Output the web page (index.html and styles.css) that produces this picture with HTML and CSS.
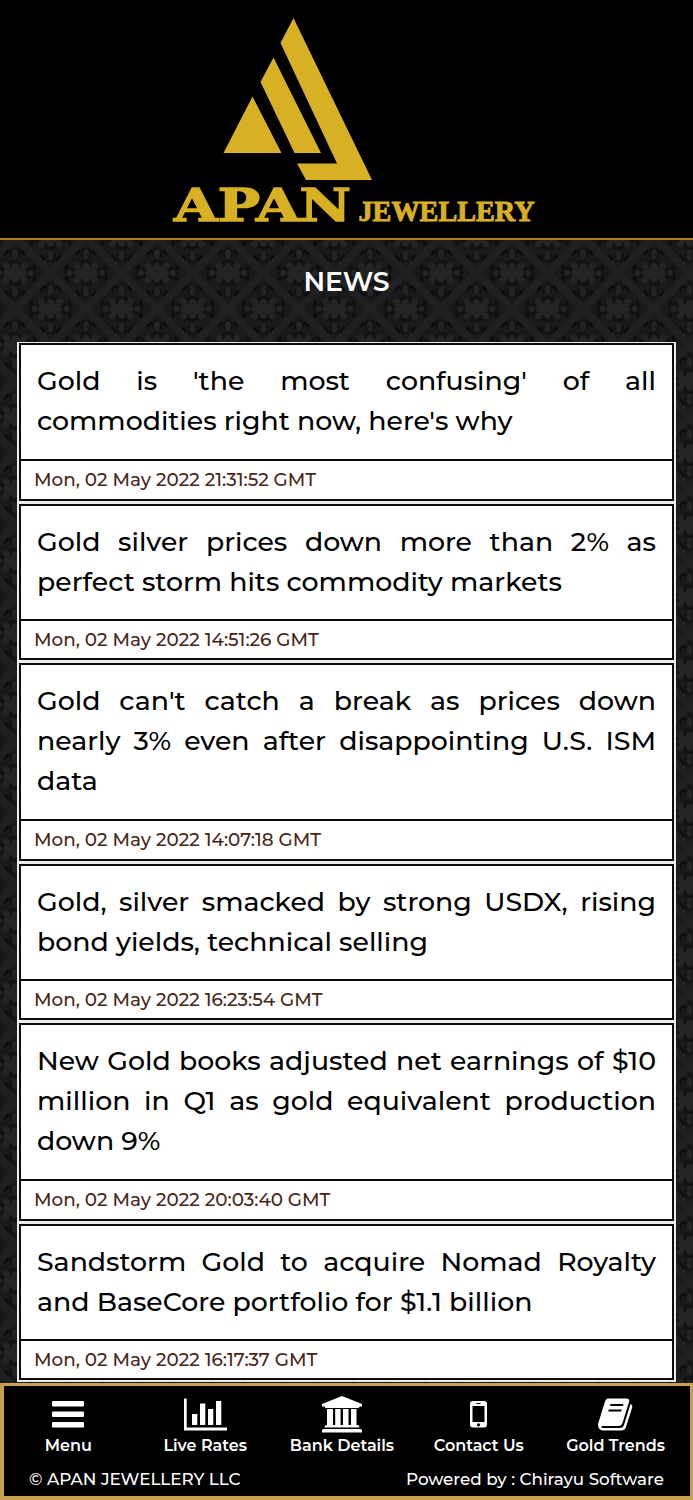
FILE: index.html
```html
<!DOCTYPE html>
<html lang="en">
<head>
<meta charset="utf-8">
<title>News</title>
<link rel="stylesheet" href="styles.css">
</head>
<body>
<svg class="damask" width="693" height="1145" aria-hidden="true">
  <defs>
    <g id="petals">
      <g fill="#121215"><ellipse rx="22" ry="8"/><ellipse rx="13" ry="13"/><circle cy="-20" r="5.500"/><circle cy="20" r="5.500"/></g>
      <g fill="#242427"><ellipse rx="12" ry="6"/><ellipse rx="5" ry="10"/><circle cx="-16" r="3"/><circle cx="16" r="3"/><circle cx="-9" cy="-7" r="3.500"/><circle cx="9" cy="-7" r="3.500"/><circle cx="-9" cy="7" r="3.500"/><circle cx="9" cy="7" r="3.500"/><ellipse cy="-19" rx="3" ry="5"/><ellipse cy="19" rx="3" ry="5"/></g>
      <path d="M-6-23-10-18M6-23 10-18M-6 23-10 18M6 23 10 18M-21-4-18-8M21-4 18-8M-21 4-18 8M21 4 18 8" stroke="#0b0b0e" stroke-width="2.500"/>
    </g>
    <pattern id="damask" width="71" height="72" patternUnits="userSpaceOnUse" x="15" y="-3">
      <rect width="71" height="72" fill="#1a1a1d"/>
      <path d="M-5-5 76 77M76-5-5 77" stroke="#212124" stroke-width="7"/>
      <use href="#petals" x="0" y="36"/><use href="#petals" x="71" y="36"/>
      <use href="#petals" x="35.5" y="0"/><use href="#petals" x="35.5" y="72"/>
    </pattern>
  </defs>
  <rect width="693" height="1145" fill="url(#damask)"/>
</svg>
<header class="masthead">
  <svg class="logo" width="380" height="238" viewBox="165 0 380 238" role="img" aria-label="Apan Jewellery">
    <path d="M293.500 18 372 180H306L297 163.500H337L280.500 43ZM273.500 57.500 321 153H294.500L260.500 82ZM252.500 96.500 281.500 153H223.500Z"/>
    <text class="logo-main" x="174" y="220.500" textLength="177" lengthAdjust="spacingAndGlyphs">APAN</text>
    <text class="logo-sub" x="358.500" y="220.500" textLength="176" lengthAdjust="spacingAndGlyphs">JEWELLERY</text>
  </svg>
</header>
<main>
  <h1 class="title">NEWS</h1>
  <section class="news">
    <article class="card roomy"><h2>Gold is 'the most confusing' of all commodities right now, here's why</h2><time>Mon, 02 May 2022 21:31:52 GMT</time></article>
    <article class="card"><h2>Gold silver prices down more than 2% as perfect storm hits commodity markets</h2><time>Mon, 02 May 2022 14:51:26 GMT</time></article>
    <article class="card roomy"><h2>Gold can't catch a break as prices down nearly 3% even after disappointing U.S. ISM data</h2><time>Mon, 02 May 2022 14:07:18 GMT</time></article>
    <article class="card"><h2>Gold, silver smacked by strong USDX, rising bond yields, technical selling</h2><time>Mon, 02 May 2022 16:23:54 GMT</time></article>
    <article class="card roomy"><h2>New Gold books adjusted net earnings of $10 million in Q1 as gold equivalent production down 9%</h2><time>Mon, 02 May 2022 20:03:40 GMT</time></article>
    <article class="card"><h2>Sandstorm Gold to acquire Nomad Royalty and BaseCore portfolio for $1.1 billion</h2><time>Mon, 02 May 2022 16:17:37 GMT</time></article>
  </section>
</main>
<footer class="dock">
  <nav>
    <a><svg width="32" height="38" viewBox="0 0 32 38"><rect y="6" width="32" height="5.500" rx="1.300"/><rect y="16.500" width="32" height="5.500" rx="1.300"/><rect y="27" width="32" height="5.500" rx="1.300"/></svg>Menu</a>
    <a><svg width="43" height="38" viewBox="0 0 43 38"><path d="M0 3.500H2.700V32.500H43V35.500H0ZM8 19H13.300V30H8ZM16 8.500H21.300V30H16ZM24 14H29.300V30H24ZM32 6H37.300V30H32Z"/></svg>Live Rates</a>
    <a><svg width="40" height="38" viewBox="0 0 40 38"><path d="M20 1 40 9V11.500H37.500Q37.500 13 36 13H4Q2.500 13 2.500 11.500H0V9ZM5 14H11V30H13.200V14H18.600V30H21V14H26.500V30H29V14H34.500V30H36Q37.500 30 37.500 32.500H2.500Q2.500 30 5 30ZM1.500 34H38.500Q40 34 40 35.500V37.500H0V35.500Q0 34 1.500 34Z"/></svg>Bank Details</a>
    <a><svg width="17" height="38" viewBox="0 0 17 38"><path fill-rule="evenodd" d="M3 6H14Q17 6 17 9V29.500Q17 32.500 14 32.500H3Q0 32.500 0 29.500V9Q0 6 3 6ZM2.500 11V27H14.500V11ZM6.500 8V9H10.500V8ZM8.500 28.200A1.600 1.600 0 1 0 8.500 31.400 1.600 1.600 0 0 0 8.500 28.200Z"/></svg>Contact Us</a>
    <a><svg width="35" height="38" viewBox="0 0 35 38"><path d="M10 3.500H29Q32 4 31 7L24.500 28Q23.500 31 20.500 31H5Q2.500 31 3.500 32.500 4 33 6 33H22Q25 33 26 30L32.500 9Q35 10 34.300 12L28 32Q27 35.500 23 35.500H5Q0 35 0 29L7 6.500Q8 3.500 10 3.500Z"/><path class="slot" d="M12.500 9H25.500L25 11H12ZM10.800 14.500H23.800L23.200 16.500H10.200Z"/></svg>Gold Trends</a>
  </nav>
  <div class="legal"><span>© APAN JEWELLERY LLC</span><span class="powered">Powered by : Chirayu Software</span></div>
</footer>
</body>
</html>
```
FILE: styles.css
```css
*{box-sizing:border-box}
body{margin:0;height:1500px;overflow:hidden;position:relative;background:#1c1c20;font-family:Montserrat,Inter,sans-serif;font-weight:500}
.damask{position:absolute;top:240px;left:0;z-index:-1}
.masthead{height:240px;background:#000;border-bottom:2px solid #b17e08;display:flex;justify-content:center;padding-left:17px}
.logo{display:block;flex:none}
.logo path,.logo text{fill:#d7b023}
.logo text{font-family:"DejaVu Serif",serif;font-weight:700;stroke:#d7b023;stroke-width:1.4px}
.logo .logo-main{font-size:45px}
.logo .logo-sub{font-family:"Liberation Serif",serif;font-size:30px;stroke-width:1px}
.title{margin:0;height:102px;padding-top:22px;text-align:center;color:#fff;font-size:26.700px;line-height:40px;font-weight:600}
.news{margin:0 17px;padding:1px 2px 2px;background:#ececec;display:flex;flex-direction:column;gap:3px}
.card{background:#fff;border:2px solid #0c0c0c}
.card h2{margin:0;padding:16px 16px 17px;border-bottom:2px solid #0c0c0c;font-size:26.780px;line-height:40px;font-weight:500;color:#000;text-align:justify}
.card time{display:block;height:37px;line-height:37px;padding-left:13px;font-size:18.370px;font-weight:500;color:#4a2618}
.roomy h2{padding-bottom:18px}
.roomy time{height:38px}
.dock{position:absolute;left:0;right:0;top:1383px;height:117px;background:#000;border:3px solid #c8a050;border-width:3px 3px 4px 4px;color:#fff}
.dock nav{display:grid;grid-template-columns:repeat(5,1fr);padding-top:9px;margin:0 6px 0 -4px}
.dock a{display:flex;flex-direction:column;align-items:center;gap:1px;font-size:16px;font-weight:600;line-height:24px;white-space:nowrap}
.dock svg{fill:#fff}
.dock .slot{fill:#000}
.legal{display:flex;justify-content:space-between;padding:9px 26px 0 25px;font-size:16.750px;line-height:24px}
```
